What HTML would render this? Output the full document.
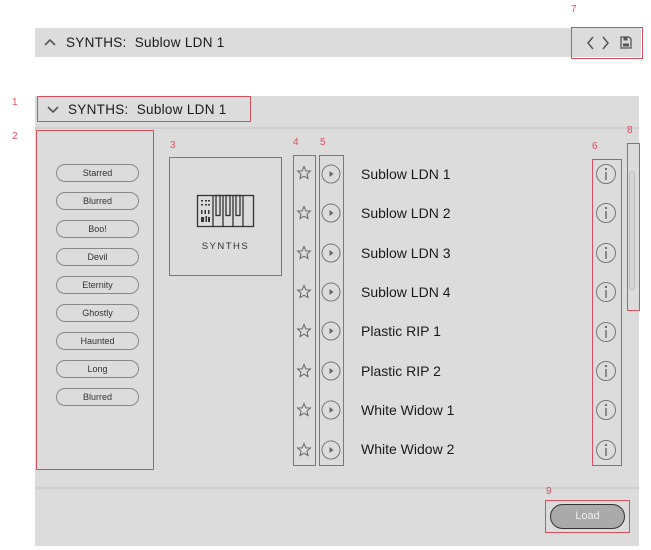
<!DOCTYPE html>
<html><head><meta charset="utf-8"><style>
*{margin:0;padding:0;box-sizing:border-box}
body{width:651px;height:550px;background:#fff;position:relative;overflow:hidden;font-family:"Liberation Sans",sans-serif;color:#222}
.a{position:absolute}
.r{position:absolute;border:1.3px solid #d5505e}
.n{position:absolute;color:#d5505e;font-size:10px}
.tag{position:absolute;left:56px;width:83px;height:18px;border:1.3px solid #888;border-radius:9px;font-size:9px;text-align:center;line-height:16px;color:#333}
.nm{position:absolute;left:361px;font-size:14px;color:#1a1a1a}
svg{position:absolute;overflow:visible}
</style></head><body>
<div class="a" style="left:35px;top:28px;width:606px;height:29px;background:#dcdcdc"></div>
<svg style="left:44px;top:38px" width="12" height="8"><path d="M1 7 L6 2 L11 7" fill="none" stroke="#555" stroke-width="1.6"/></svg>
<div class="a" style="left:66px;top:35px;font-size:13.5px;letter-spacing:0.3px;color:#1a1a1a">SYNTHS:&nbsp; Sublow LDN 1</div>
<div class="r" style="left:571px;top:27px;width:72px;height:32px"></div>
<div class="n" style="left:571px;top:4px">7</div>
<svg style="left:587px;top:36px" width="30" height="14"><path d="M6 1 L1 7 L6 13" fill="none" stroke="#555" stroke-width="1.5"/><path d="M16 1 L21 7 L16 13" fill="none" stroke="#555" stroke-width="1.5"/></svg>
<svg style="left:620px;top:36px" width="12" height="13"><path d="M1 1 H9 L11 3 V12 H1 Z" fill="none" stroke="#555" stroke-width="1.3"/><rect x="3.5" y="1.5" width="4" height="3" fill="#555"/><rect x="3" y="7.5" width="6" height="3" fill="#555"/></svg>

<div class="a" style="left:35px;top:96px;width:604px;height:450px;background:#dcdcdc"></div>
<div class="a" style="left:35px;top:127px;width:604px;height:2px;background:#cfcfcf"></div>
<div class="a" style="left:35px;top:487px;width:604px;height:2px;background:#cfcfcf"></div>
<svg style="left:47px;top:106px" width="12" height="8"><path d="M1 1 L6 6 L11 1" fill="none" stroke="#555" stroke-width="1.6"/></svg>
<div class="a" style="left:68px;top:102px;font-size:13.5px;letter-spacing:0.3px;color:#1a1a1a">SYNTHS:&nbsp; Sublow LDN 1</div>
<div class="r" style="left:37px;top:96px;width:214px;height:26px"></div>
<div class="n" style="left:12px;top:97px">1</div>

<div class="r" style="left:36px;top:130px;width:118px;height:340px"></div>
<div class="n" style="left:12px;top:131px">2</div>
<div class="tag" style="top:164px">Starred</div>
<div class="tag" style="top:192px">Blurred</div>
<div class="tag" style="top:220px">Boo!</div>
<div class="tag" style="top:248px">Devil</div>
<div class="tag" style="top:276px">Eternity</div>
<div class="tag" style="top:304px">Ghostly</div>
<div class="tag" style="top:332px">Haunted</div>
<div class="tag" style="top:360px">Long</div>
<div class="tag" style="top:388px">Blurred</div>

<div class="r" style="left:169px;top:157px;width:113px;height:119px"></div>
<div class="n" style="left:170px;top:140px">3</div>
<svg style="left:197px;top:195px" width="57" height="32"><g fill="none" stroke="#333" stroke-width="1.3"><rect x="0.5" y="0.5" width="56" height="31"/><line x1="16" y1="0.5" x2="16" y2="31.5"/><line x1="26" y1="0.5" x2="26" y2="31.5"/><line x1="36" y1="0.5" x2="36" y2="31.5"/><line x1="46" y1="0.5" x2="46" y2="31.5"/><rect x="19" y="0.5" width="4" height="20"/><rect x="29" y="0.5" width="4" height="20"/><rect x="39" y="0.5" width="4" height="20"/></g><g fill="#333"><rect x="4" y="5" width="2" height="1.5"/><rect x="8" y="5" width="2" height="1.5"/><rect x="11" y="5" width="2" height="1.5"/><rect x="4" y="9" width="2" height="1.5"/><rect x="8" y="9" width="2" height="1.5"/><rect x="11" y="9" width="2" height="1.5"/><rect x="4" y="15" width="1.5" height="4"/><rect x="7.5" y="15" width="1.5" height="4"/><rect x="11" y="15" width="1.5" height="4"/><rect x="4" y="22" width="3" height="5"/><rect x="8.5" y="21" width="1.5" height="6"/><rect x="11" y="22" width="2" height="5"/></g></svg>
<div class="a" style="left:169px;top:241px;width:113px;text-align:center;font-size:9.5px;letter-spacing:1.5px;color:#333">SYNTHS</div>

<div class="r" style="left:293px;top:155px;width:23px;height:311px"></div>
<div class="n" style="left:293px;top:137px">4</div>
<div class="r" style="left:319px;top:155px;width:25px;height:311px"></div>
<div class="n" style="left:320px;top:137px">5</div>
<div class="r" style="left:592px;top:159px;width:30px;height:307px"></div>
<div class="n" style="left:592px;top:141px">6</div>
<div class="r" style="left:627px;top:143px;width:13px;height:168px"></div>
<div class="n" style="left:627px;top:125px">8</div>
<div class="a" style="left:629px;top:171px;width:6px;height:119px;border:1px solid #bbb;border-radius:3px;background:#d6d6d6"></div>

<svg style="left:0;top:0" width="651" height="550">
<defs>
<g id="st"><path d="M0 -6.5 L1.9 -2.1 L6.4 -2 L3 1 L4 5.6 L0 3.2 L-4 5.6 L-3 1 L-6.4 -2 L-1.9 -2.1 Z" fill="none" stroke="#666" stroke-width="1"/></g>
<g id="pl"><circle r="9" fill="none" stroke="#777" stroke-width="1"/><path d="M-1.5 -3 L2.5 0 L-1.5 3 Z" fill="#666"/></g>
<g id="inf"><circle r="9.5" fill="none" stroke="#777" stroke-width="1"/><circle cx="0" cy="-5" r="1.1" fill="#666"/><line x1="0" y1="-2" x2="0" y2="6" stroke="#666" stroke-width="1.4"/></g>
</defs>
<use href="#st" x="304" y="173"/><use href="#pl" x="331" y="174"/><use href="#inf" x="606" y="174"/>
<use href="#st" x="304" y="213"/><use href="#pl" x="331" y="213"/><use href="#inf" x="606" y="213"/>
<use href="#st" x="304" y="253"/><use href="#pl" x="331" y="253"/><use href="#inf" x="606" y="253"/>
<use href="#st" x="304" y="292"/><use href="#pl" x="331" y="292"/><use href="#inf" x="606" y="292"/>
<use href="#st" x="304" y="331"/><use href="#pl" x="331" y="331"/><use href="#inf" x="606" y="332"/>
<use href="#st" x="304" y="371"/><use href="#pl" x="331" y="371"/><use href="#inf" x="606" y="371"/>
<use href="#st" x="304" y="410"/><use href="#pl" x="331" y="410"/><use href="#inf" x="606" y="410"/>
<use href="#st" x="304" y="450"/><use href="#pl" x="331" y="450"/><use href="#inf" x="606" y="450"/>
</svg>
<div class="nm" style="top:166px">Sublow LDN 1</div>
<div class="nm" style="top:205px">Sublow LDN 2</div>
<div class="nm" style="top:245px">Sublow LDN 3</div>
<div class="nm" style="top:284px">Sublow LDN 4</div>
<div class="nm" style="top:323px">Plastic RIP 1</div>
<div class="nm" style="top:363px">Plastic RIP 2</div>
<div class="nm" style="top:402px">White Widow 1</div>
<div class="nm" style="top:441px">White Widow 2</div>

<div class="r" style="left:545px;top:500px;width:85px;height:33px"></div>
<div class="n" style="left:546px;top:486px">9</div>
<div class="a" style="left:550px;top:504px;width:75px;height:25px;border:1.6px solid #333;border-radius:13px;background:#aaa;color:#eee;font-size:11px;text-align:center;line-height:22px">Load</div>
</body></html>
